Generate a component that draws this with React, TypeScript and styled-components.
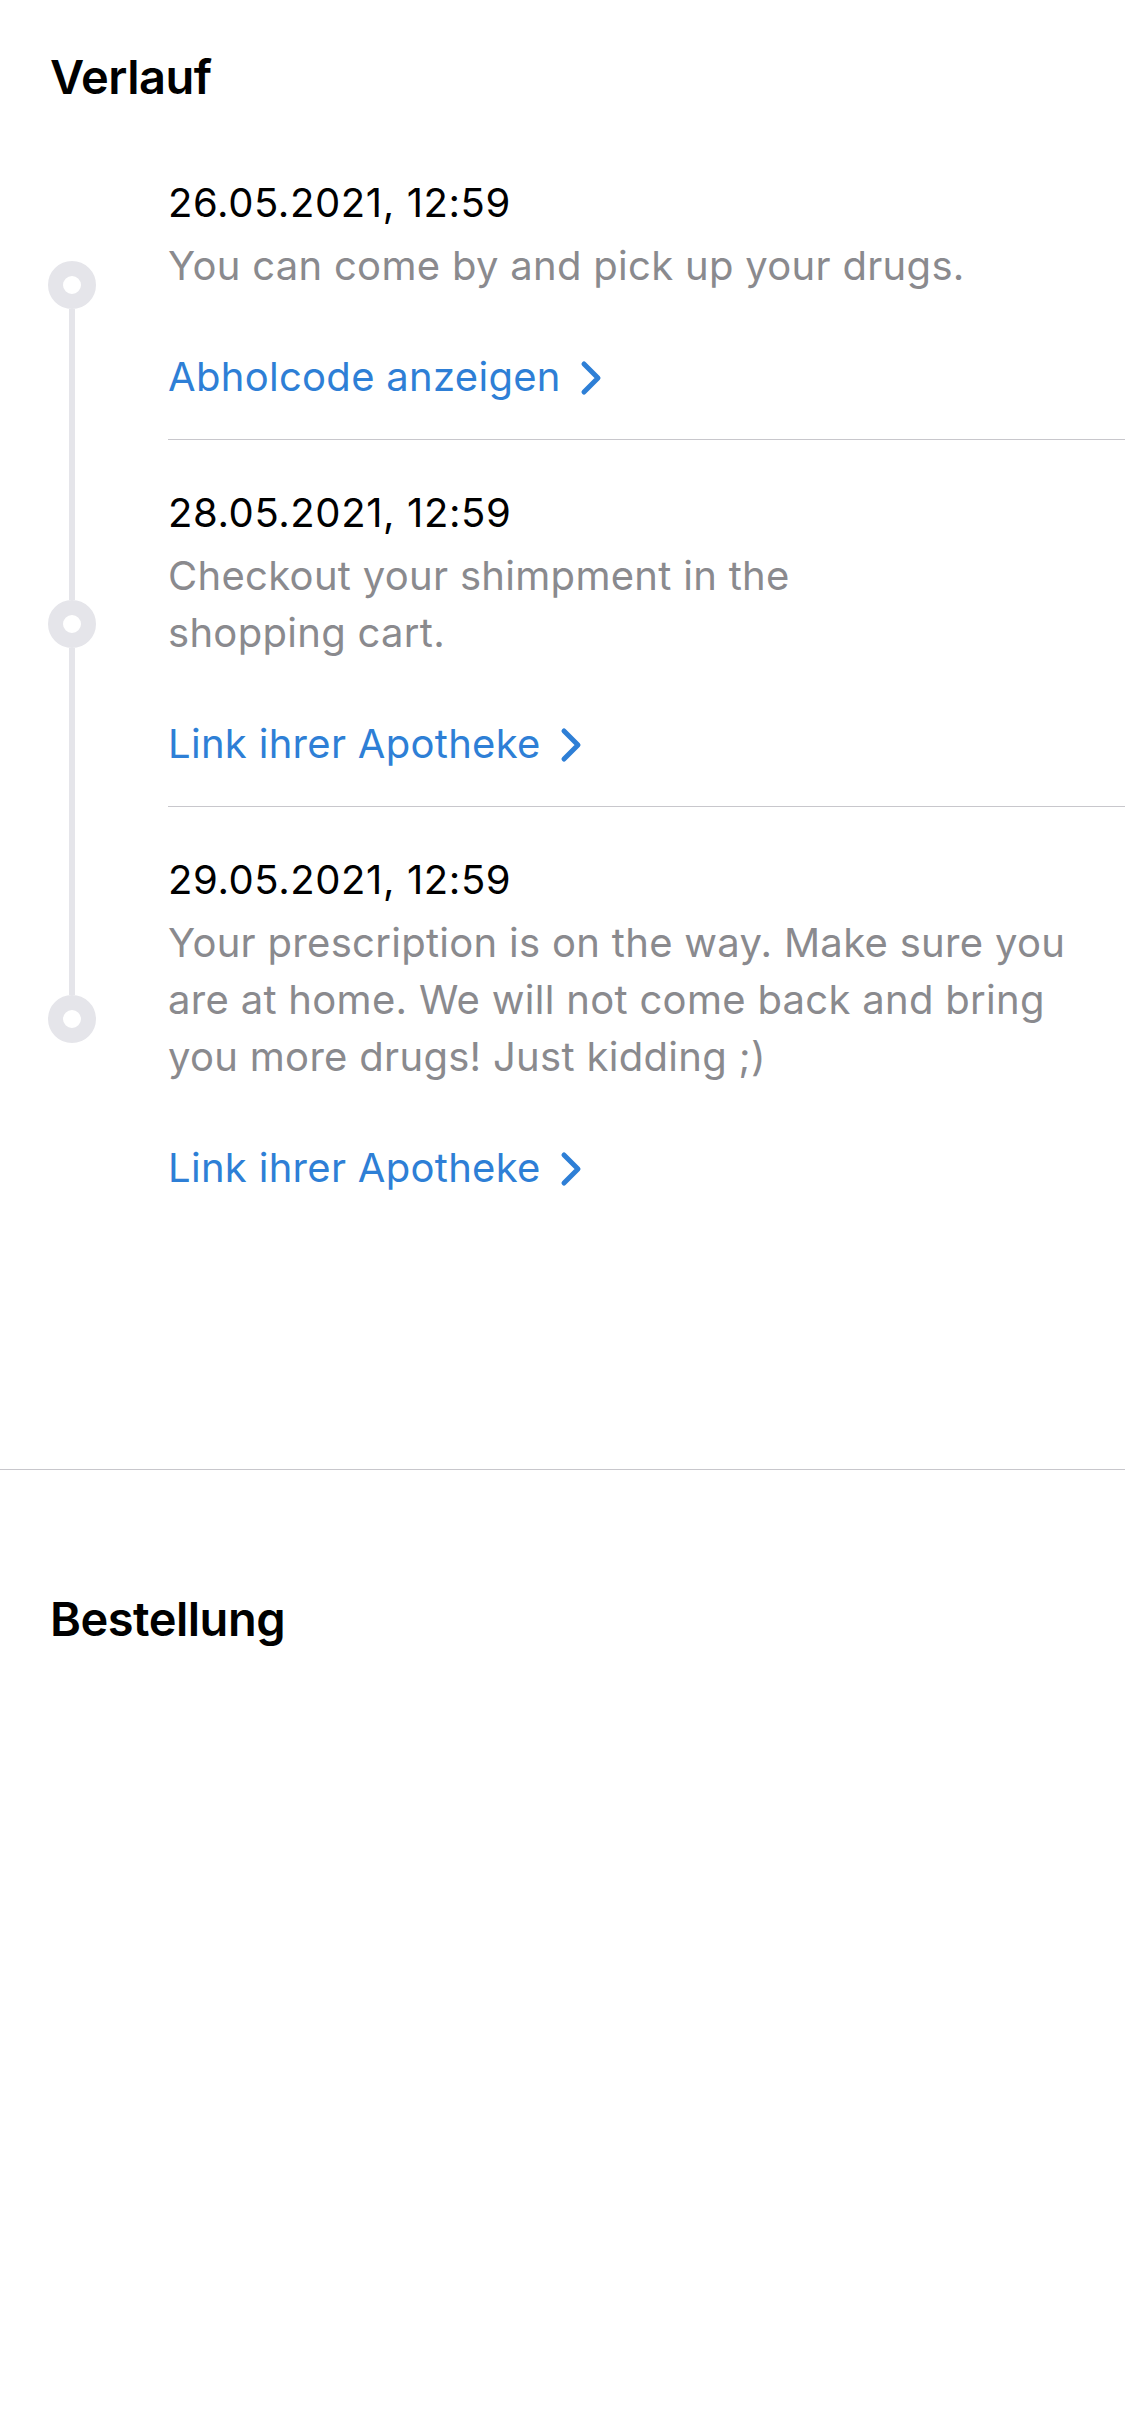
import React from "react";
import styled, { createGlobalStyle } from "styled-components";

const GlobalStyle = createGlobalStyle`
  html, body {
    margin: 0;
    padding: 0;
    background: #ffffff;
  }
  body {
    font-family: Inter, "Noto Sans", "Liberation Sans", sans-serif;
    -webkit-font-smoothing: antialiased;
  }
`;

const Page = styled.div`
  width: 1125px;
  min-height: 2436px;
  background: #ffffff;
  display: flex;
  flex-direction: column;
`;

const Section = styled.section<{ $divider?: boolean }>`
  display: flex;
  flex-direction: column;
  padding-top: ${(p) => (p.$divider ? "49px" : "121px")};
  padding-bottom: ${(p) => (p.$divider ? "239px" : "0")};
  border-bottom: ${(p) => (p.$divider ? "1px solid #c8c7cc" : "none")};
`;

const Heading = styled.h2`
  margin: 0;
  padding-left: 50px;
  font-size: 47px;
  line-height: 56px;
  font-weight: 600;
  color: #000000;
  letter-spacing: -0.5px;
`;

const Timeline = styled.div`
  display: flex;
  flex-direction: column;
  margin-top: 25px;
`;

const Row = styled.div`
  display: grid;
  grid-template-columns: 144px 1fr;
  column-gap: 24px;
`;

const Rail = styled.div`
  display: flex;
  flex-direction: column;
  align-items: center;
`;

const RailSegment = styled.div<{ $visible: boolean }>`
  flex: 1;
  width: 6px;
  background: ${(p) => (p.$visible ? "#e5e5ea" : "transparent")};
`;

const Dot = styled.div`
  width: 48px;
  height: 48px;
  box-sizing: border-box;
  border-radius: 50%;
  border: 15px solid #e5e5ea;
  background: #ffffff;
  flex: none;
`;

const Content = styled.div<{ $last: boolean }>`
  display: flex;
  flex-direction: column;
  align-items: flex-start;
  padding: 44px 48px 34px 0;
  border-bottom: ${(p) => (p.$last ? "none" : "1px solid #c8c7cc")};
`;

const DateText = styled.div`
  font-size: 40px;
  line-height: 57px;
  color: #000000;
  letter-spacing: 0.6px;
`;

const Description = styled.div<{ $maxWidth?: number }>`
  margin-top: 6px;
  font-size: 40px;
  line-height: 57px;
  color: #8a8a8e;
  letter-spacing: 0.3px;
  max-width: ${(p) => (p.$maxWidth ? `${p.$maxWidth}px` : "none")};
`;

const LinkButton = styled.a`
  margin-top: 54px;
  display: inline-flex;
  align-items: center;
  gap: 18px;
  font-size: 40px;
  line-height: 57px;
  color: #2e7fd6;
  letter-spacing: 0.3px;
  text-decoration: none;
  cursor: pointer;
`;

const ChevronIcon = styled.svg`
  flex: none;
  margin-top: 2px;
`;

const Chevron = () => (
  <ChevronIcon width="24" height="36" viewBox="0 0 24 36" fill="none">
    <polyline
      points="5,4 19,18 5,32"
      stroke="#2e7fd6"
      strokeWidth="5"
      strokeLinecap="round"
      strokeLinejoin="round"
    />
  </ChevronIcon>
);

type Entry = {
  date: string;
  text: string;
  link: string;
  maxWidth?: number;
};

const entries: Entry[] = [
  {
    date: "26.05.2021, 12:59",
    text: "You can come by and pick up your drugs.",
    link: "Abholcode anzeigen",
  },
  {
    date: "28.05.2021, 12:59",
    text: "Checkout your shimpment in the shopping cart.",
    link: "Link ihrer Apotheke",
    maxWidth: 700,
  },
  {
    date: "29.05.2021, 12:59",
    text: "Your prescription is on the way. Make sure you are at home. We will not come back and bring you more drugs! Just kidding ;)",
    link: "Link ihrer Apotheke",
  },
];

export default function App() {
  return (
    <Page>
      <GlobalStyle />
      <Section $divider>
        <Heading>Verlauf</Heading>
        <Timeline>
          {entries.map((e, i) => (
            <Row key={i}>
              <Rail>
                <RailSegment $visible={i > 0} />
                <Dot />
                <RailSegment $visible={i < entries.length - 1} />
              </Rail>
              <Content $last={i === entries.length - 1}>
                <DateText>{e.date}</DateText>
                <Description $maxWidth={e.maxWidth}>{e.text}</Description>
                <LinkButton>
                  {e.link}
                  <Chevron />
                </LinkButton>
              </Content>
            </Row>
          ))}
        </Timeline>
      </Section>
      <Section>
        <Heading>Bestellung</Heading>
      </Section>
    </Page>
  );
}
